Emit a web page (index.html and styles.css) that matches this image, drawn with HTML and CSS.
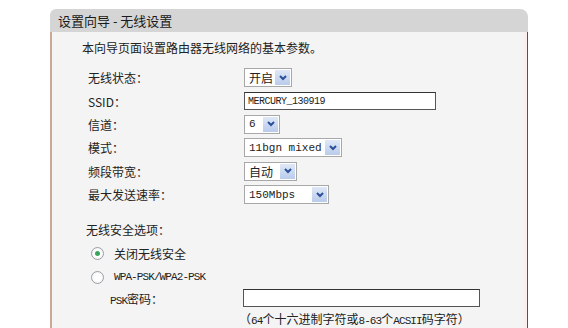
FILE: index.html
```html
<!DOCTYPE html>
<html>
<head>
<meta charset="utf-8">
<link rel="stylesheet" href="styles.css">
</head>
<body>
<div class="panel">
  <div class="title">设置向导 - 无线设置</div>
  <div class="body">
    <div class="intro">本向导页面设置路由器无线网络的基本参数。</div>
    <div class="form">
      <div class="row"><span class="label">无线状态：</span><span class="sel w48"><span class="val cjk">开启</span><span class="arrow"><svg width="10" height="8" viewBox="0 0 10 8"><path d="M2 2 L5 5 L8 2" fill="none" stroke="#2b4f9a" stroke-width="2"/></svg></span></span></div>
      <div class="row"><span class="label">SSID：</span><span class="text w192">MERCURY_130919</span></div>
      <div class="row"><span class="label">信道：</span><span class="sel w36"><span class="val">6</span><span class="arrow"><svg width="10" height="8" viewBox="0 0 10 8"><path d="M2 2 L5 5 L8 2" fill="none" stroke="#2b4f9a" stroke-width="2"/></svg></span></span></div>
      <div class="row"><span class="label">模式：</span><span class="sel w98"><span class="val">11bgn mixed</span><span class="arrow"><svg width="10" height="8" viewBox="0 0 10 8"><path d="M2 2 L5 5 L8 2" fill="none" stroke="#2b4f9a" stroke-width="2"/></svg></span></span></div>
      <div class="row"><span class="label">频段带宽：</span><span class="sel w53"><span class="val cjk">自动</span><span class="arrow"><svg width="10" height="8" viewBox="0 0 10 8"><path d="M2 2 L5 5 L8 2" fill="none" stroke="#2b4f9a" stroke-width="2"/></svg></span></span></div>
      <div class="row"><span class="label">最大发送速率：</span><span class="sel w85"><span class="val">150Mbps</span><span class="arrow"><svg width="10" height="8" viewBox="0 0 10 8"><path d="M2 2 L5 5 L8 2" fill="none" stroke="#2b4f9a" stroke-width="2"/></svg></span></span></div>
    </div>
    <div class="sec">无线安全选项：</div>
    <div class="radio-row"><span class="radio on"></span><span class="rlabel">关闭无线安全</span></div>
    <div class="radio-row"><span class="radio"></span><span class="rlabel mono">WPA-PSK/WPA2-PSK</span></div>
    <div class="psk-row"><span class="psk-label"><span class="mono">PSK</span>密码：</span><span class="text w237"></span></div>
    <div class="note">（<span class="mono">64</span>个十六进制字符或<span class="mono">8-63</span>个<span class="mono">ACSII</span>码字符）</div>
  </div>
</div>
</body>
</html>
```
FILE: styles.css
```css
html, body {
  margin: 0;
  padding: 0;
  background: #ffffff;
  height: 328px;
  overflow: hidden;
}
body {
  font-family: "Noto Sans CJK SC", "DejaVu Sans", sans-serif;
  font-size: 12px;
  color: #222;
}
.panel {
  margin: 9px 0 0 50px;
  width: 478px;
}
.title {
  height: 23px;
  line-height: 23px;
  background: #d5d5d5;
  border-radius: 6px 8px 0 0;
  padding-left: 8px;
  font-size: 13px;
  color: #1a1a1a;
}
.body {
  background: #f4f4f4;
  border-left: 2px solid #c9a898;
  border-right: 1px solid #5a5050;
  box-shadow: inset -3px 0 0 #fbeeee;
  height: 296px;
  overflow: hidden;
  padding-left: 30px;
}
.intro {
  padding-top: 8px;
  line-height: 16px;
  height: 16px;
}
.form {
  margin-top: 10px;
  padding-left: 6px;
}
.row {
  display: flex;
  align-items: center;
  height: 23.4px;
}
.label {
  width: 156px;
  flex: none;
}
.sel {
  display: inline-flex;
  align-items: center;
  justify-content: space-between;
  background: #fff;
  border: 1px solid #a8a8a8;
  box-sizing: border-box;
  height: 19px;
  padding: 0 1px 0 4px;
  white-space: nowrap;
  flex: none;
}
.val {
  font-family: "Liberation Mono", "DejaVu Sans Mono", monospace;
  font-size: 11px;
  white-space: nowrap;
}
.val.cjk {
  font-family: "Noto Sans CJK SC", sans-serif;
  font-size: 12px;
}
.arrow {
  width: 15px;
  height: 15px;
  flex: none;
  background: linear-gradient(#dfe8f6, #b9cbeb);
  display: flex;
  align-items: center;
  justify-content: center;
}
.w48 { width: 48px; }
.w36 { width: 36px; }
.w98 { width: 98px; }
.w53 { width: 53px; }
.w85 { width: 85px; }
.text {
  display: inline-flex;
  align-items: center;
  background: #fff;
  border: 1px solid #555;
  border-top-color: #333;
  box-sizing: border-box;
  height: 18px;
  padding-left: 3px;
  font-family: "Liberation Mono", "DejaVu Sans Mono", monospace;
  font-size: 10px;
  letter-spacing: -0.5px;
  flex: none;
}
.w192 { width: 192px; }
.w237 { width: 237px; }
.sec {
  margin-top: 12px;
  padding-left: 4px;
  height: 23px;
  line-height: 23px;
}
.radio-row {
  display: flex;
  align-items: center;
  height: 24px;
  padding-left: 9px;
}
.radio {
  width: 11px;
  height: 11px;
  border: 1px solid #9aa0a8;
  border-radius: 50%;
  background: radial-gradient(circle, #fff 40%, #e6e8ea 100%);
  margin-right: 10px;
  position: relative;
}
.radio.on::after {
  content: "";
  position: absolute;
  left: 3px;
  top: 3px;
  width: 5px;
  height: 5px;
  border-radius: 50%;
  background: #3aa55a;
}
.rlabel {
  font-size: 12px;
}
.mono {
  font-family: "Liberation Mono", "DejaVu Sans Mono", monospace;
  font-size: 11px;
  letter-spacing: -0.9px;
}
.psk-row {
  display: flex;
  align-items: center;
  height: 18px;
  margin-top: 0;
  padding-left: 28px;
}
.psk-label {
  width: 133px;
  flex: none;
}
.note {
  margin-top: 4px;
  padding-left: 157px;
  line-height: 16px;
  font-size: 12px;
}
```
